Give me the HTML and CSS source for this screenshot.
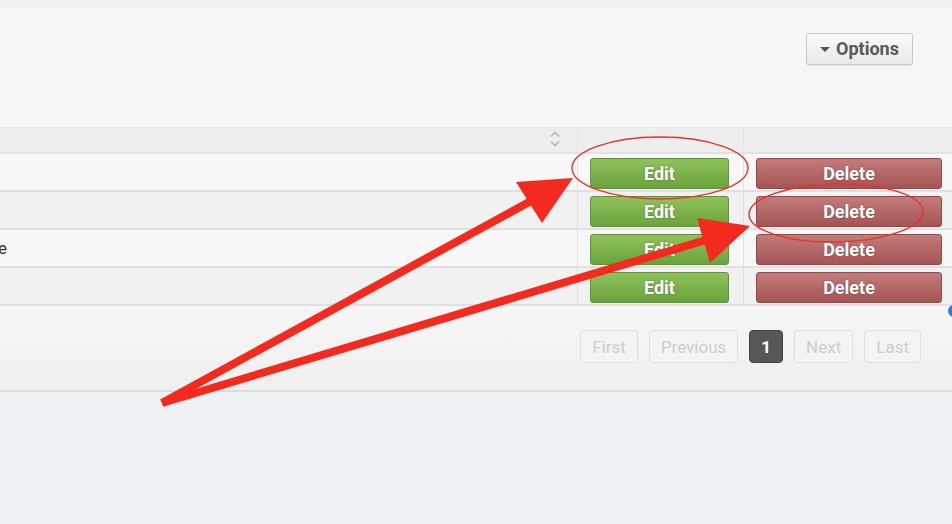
FILE: index.html
```html
<!DOCTYPE html>
<html>
<head>
<meta charset="utf-8">
<link rel="stylesheet" href="styles.css">
</head>
<body>
<div class="page">
  <div class="panel">
    <div class="toolbar">
      <button class="options"><span class="caret"></span>Options</button>
    </div>
    <div class="grid">
      <div class="row head">
        <div class="cell c1">
          <svg class="sort" width="12" height="18" viewBox="0 0 12 18"><path d="M2 6.5 L6 2.5 L10 6.5 M2 11.5 L6 15.5 L10 11.5" fill="none" stroke="#b5b5b5" stroke-width="1.6"/></svg>
        </div>
        <div class="cell c2"></div>
        <div class="cell c3"></div>
      </div>
      <div class="row odd">
        <div class="cell c1"></div>
        <div class="cell c2"><button class="btn edit">Edit</button></div>
        <div class="cell c3"><button class="btn delete">Delete</button></div>
      </div>
      <div class="row even">
        <div class="cell c1"></div>
        <div class="cell c2"><button class="btn edit">Edit</button></div>
        <div class="cell c3"><button class="btn delete">Delete</button></div>
      </div>
      <div class="row odd">
        <div class="cell c1"><span class="name">e</span></div>
        <div class="cell c2"><button class="btn edit">Edit</button></div>
        <div class="cell c3"><button class="btn delete">Delete</button></div>
      </div>
      <div class="row even">
        <div class="cell c1"></div>
        <div class="cell c2"><button class="btn edit">Edit</button></div>
        <div class="cell c3"><button class="btn delete">Delete</button></div>
      </div>
    </div>
    <div class="footer">
      <nav class="pager">
        <span class="pg">First</span>
        <span class="pg">Previous</span>
        <span class="pg current">1</span>
        <span class="pg">Next</span>
        <span class="pg">Last</span>
      </nav>
    </div>
  </div>
  <div class="dot"></div>
  <svg class="annot" width="952" height="524" viewBox="0 0 952 524">
    <ellipse cx="660" cy="168" rx="88" ry="31" fill="none" stroke="#e8322a" stroke-width="1.4"/>
    <ellipse cx="836" cy="213" rx="87" ry="29" fill="none" stroke="#e8322a" stroke-width="1.4" transform="rotate(-1 836 213)"/>
    <line x1="162" y1="403" x2="531" y2="201" stroke="#f42a1f" stroke-width="8"/>
    <polygon points="516,182 573,178 542,223" fill="#f42a1f"/>
    <line x1="162" y1="403" x2="706" y2="240" stroke="#f42a1f" stroke-width="8"/>
    <polygon points="697,218 750,226 710,263" fill="#f42a1f"/>
  </svg>
</div>
</body>
</html>
```
FILE: styles.css
```css
html, body {
  margin: 0;
  padding: 0;
  overflow: hidden;
  width: 952px;
  height: 524px;
  background: #eef2f5;
  font-family: Roboto, "Liberation Sans", Arial, sans-serif;
}

.page {
  position: relative;
  width: 952px;
  height: 524px;
  padding-top: 8px;
  box-sizing: border-box;
}

.panel {
  width: 962px;
  margin-left: -6px;
  background: #f6f6f6;
  border-bottom: 2px solid #dcdcdc;
}

.toolbar {
  height: 120px;
  box-sizing: border-box;
  display: flex;
  justify-content: flex-end;
  align-items: flex-start;
  padding: 25px 43px 0 0;
  border-bottom: 1px solid #ebebeb;
}

.options {
  width: 107px;
  height: 32px;
  display: flex;
  align-items: center;
  justify-content: center;
  gap: 6px;
  background: linear-gradient(#fafafa, #e9e9e9);
  border: 1.5px solid #c9c9c9;
  border-radius: 3px;
  box-shadow: 0 1px 1px rgba(0,0,0,0.08);
  font-family: Roboto, "Liberation Sans", Arial, sans-serif;
  font-size: 18px;
  font-weight: 700;
  color: #595959;
  padding: 0 0 2px 0;
}

.caret {
  width: 0;
  height: 0;
  border-left: 5px solid transparent;
  border-right: 5px solid transparent;
  border-top: 5px solid #555;
  margin-top: 2px;
}

.grid {
  display: flex;
  flex-direction: column;
}

.row {
  display: grid;
  grid-template-columns: 583px 166px 213px;
  border-bottom: 2px solid #e0e0e0;
}

.row.head {
  height: 24px;
  background: #eeeeee;
  border-bottom: 2px solid #e2e2e2;
}

.row.odd { background: #f7f7f7; }
.row.even { background: #f1f1f1; }

.cell {
  box-sizing: border-box;
  height: 36px;
  padding: 4px 14px 0 12px;
}

.head .cell {
  height: 22px;
  padding: 0;
}

.cell.c2, .cell.c3 {
  border-left: 1px solid #e0e0e0;
}

.head .cell.c2, .head .cell.c3 {
  border-left: 1px solid #e4e4e4;
}

.head .c1 {
  display: flex;
  justify-content: flex-end;
  align-items: center;
  padding-right: 16px;
}

.sort { display: block; }

.row .c1 {
  padding-left: 4px;
  display: flex;
  align-items: center;
  padding-top: 0;
}

.name {
  font-size: 17px;
  color: #333;
}

.btn {
  display: block;
  width: 100%;
  height: 31px;
  border-radius: 3px;
  font-family: Roboto, "Liberation Sans", Arial, sans-serif;
  font-size: 18px;
  font-weight: 700;
  color: #fff;
  padding: 0 0 1px 0;
  text-shadow: 0 0 2px rgba(0,0,0,0.35);
}

.edit {
  background: linear-gradient(#8fc25e, #6aa33b);
  border: 1px solid #5d9533;
}

.delete {
  background: linear-gradient(#c27b7b, #a65454);
  border: 1px solid #984646;
}

.footer {
  height: 84px;
  box-sizing: border-box;
  display: flex;
  justify-content: flex-end;
  align-items: flex-start;
  padding: 24px 35px 0 0;
  background: linear-gradient(#f6f6f6, #efefef);
}

.pager {
  display: flex;
  gap: 11px;
}

.pg {
  height: 33px;
  box-sizing: border-box;
  display: flex;
  align-items: center;
  padding: 0 11px;
  border: 1.5px solid #e0e0e0;
  border-radius: 4px;
  background: #f4f4f4;
  font-size: 17px;
  color: #cdcdcd;
}

.pg.current {
  background: #575757;
  border-color: #444;
  color: #fff;
  font-weight: 700;
  padding: 0 11px;
}

.dot {
  position: absolute;
  left: 948px;
  top: 305px;
  width: 12px;
  height: 12px;
  border-radius: 50%;
  background: #2b7de0;
}

.annot {
  position: absolute;
  left: 0;
  top: 0;
  pointer-events: none;
}
```
